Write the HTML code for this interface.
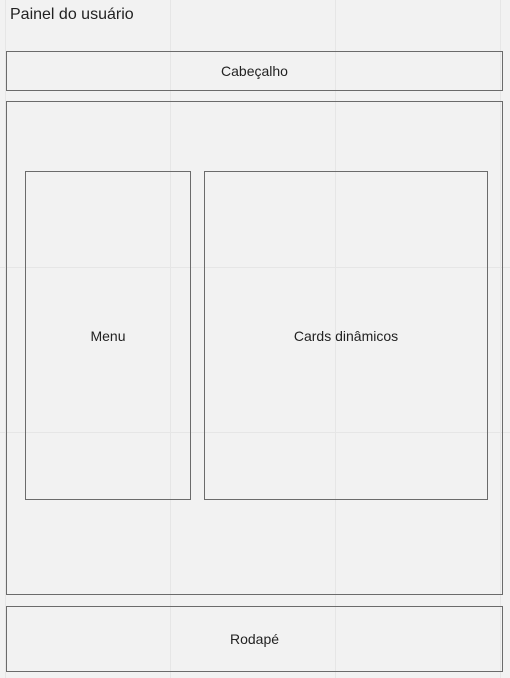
<!DOCTYPE html>
<html><head><style>
body{margin:0;width:510px;height:678px;background:#f2f2f2;position:relative;overflow:hidden;font-family:"Liberation Sans","DejaVu Sans",sans-serif;color:#222}
.g{position:absolute;background:#e6e6e6}
.b{position:absolute;border:1px solid #6b6b6b;box-sizing:border-box;display:flex;align-items:center;justify-content:center;font-size:14px}
</style></head><body>
<div class="g" style="left:5px;top:0;width:1px;height:678px"></div>
<div class="g" style="left:170px;top:0;width:1px;height:678px"></div>
<div class="g" style="left:335px;top:0;width:1px;height:678px"></div>
<div class="g" style="left:500px;top:0;width:1px;height:678px"></div>
<div class="g" style="left:0;top:267px;width:510px;height:1px"></div>
<div class="g" style="left:0;top:432px;width:510px;height:1px"></div>
<div style="position:absolute;left:10px;top:6px;font-size:16px">Painel do usuário</div>
<div class="b" style="left:6px;top:51px;width:497px;height:40px">Cabeçalho</div>
<div class="b" style="left:6px;top:101px;width:497px;height:494px"></div>
<div class="b" style="left:25px;top:171px;width:166px;height:329px">Menu</div>
<div class="b" style="left:204px;top:171px;width:284px;height:329px">Cards dinâmicos</div>
<div class="b" style="left:6px;top:606px;width:497px;height:66px">Rodapé</div>
</body></html>
